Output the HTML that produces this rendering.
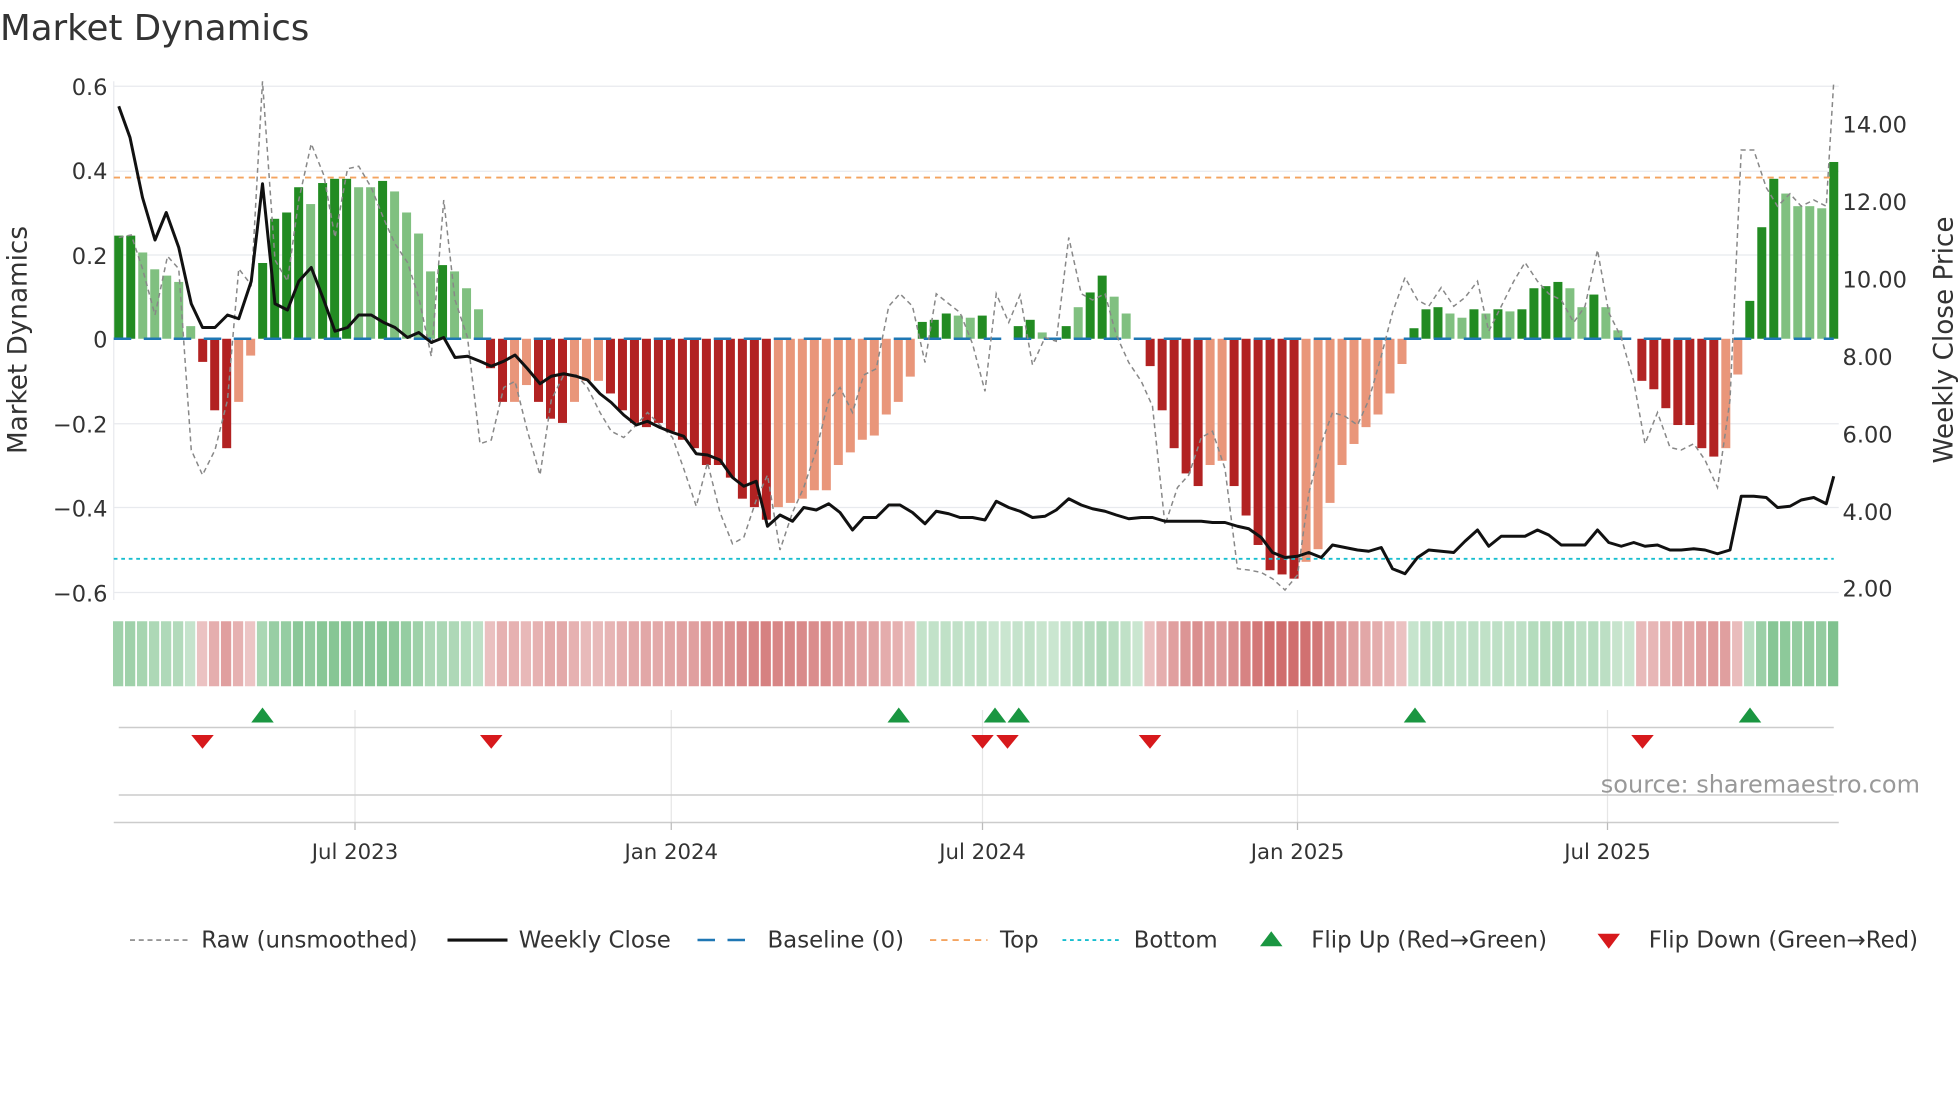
<!DOCTYPE html>
<html><head><meta charset="utf-8"><style>
html,body{margin:0;padding:0;background:#fff;width:1960px;height:1102px;overflow:hidden}
svg{display:block}
text{font-family:"DejaVu Sans","Liberation Sans",sans-serif}
</style></head><body>
<svg id="s" width="1960" height="1102" viewBox="0 0 1568 881.6" xmlns="http://www.w3.org/2000/svg">
<text x="0" y="32" font-size="28.5" fill="#333">Market Dynamics</text>
<g stroke="#e8eaee" stroke-width="1">
<line x1="91" y1="69" x2="1471" y2="69"/><line x1="91" y1="137" x2="1471" y2="137"/><line x1="91" y1="204" x2="1471" y2="204"/><line x1="91" y1="339" x2="1471" y2="339"/><line x1="91" y1="406" x2="1471" y2="406"/><line x1="91" y1="474" x2="1471" y2="474"/>
<line x1="91" y1="65" x2="91" y2="480"/>
</g>
<g font-size="18" fill="#333" text-anchor="end">
<text x="86" y="76">0.6</text><text x="86" y="143">0.4</text><text x="86" y="211">0.2</text><text x="86" y="278">0</text><text x="86" y="346">−0.2</text><text x="86" y="413">−0.4</text><text x="86" y="481">−0.6</text>
</g>
<g font-size="18" fill="#333">
<text x="1474" y="106">14.00</text><text x="1474" y="168">12.00</text><text x="1474" y="230">10.00</text><text x="1474" y="292">8.00</text><text x="1474" y="354">6.00</text><text x="1474" y="416">4.00</text><text x="1474" y="477">2.00</text>
</g>
<text transform="translate(21,272) rotate(-90)" font-size="21" fill="#333" text-anchor="middle">Market Dynamics</text>
<text transform="translate(1562,272) rotate(-90)" font-size="21" fill="#333" text-anchor="middle">Weekly Close Price</text>
<g id="bars"></g>
<line x1="91" y1="271" x2="1467" y2="271" stroke="#1f77b4" stroke-width="2" stroke-dasharray="14,10"/>
<line x1="91" y1="142" x2="1467" y2="142" stroke="#f4a460" stroke-width="1.5" stroke-dasharray="5,4"/>
<line x1="91" y1="447" x2="1467" y2="447" stroke="#17becf" stroke-width="1.5" stroke-dasharray="3,3"/>
<polyline id="raw" fill="none" stroke="#888" stroke-width="1.2" stroke-dasharray="4,3"/>
<polyline id="close" fill="none" stroke="#111" stroke-width="2.4" stroke-linejoin="round"/>
<g id="heat"></g>
<g stroke="#e6e6e6" stroke-width="1">
<line x1="284" y1="568" x2="284" y2="658"/><line x1="537" y1="568" x2="537" y2="658"/><line x1="786" y1="568" x2="786" y2="658"/><line x1="1038" y1="568" x2="1038" y2="658"/><line x1="1286" y1="568" x2="1286" y2="658"/>
</g>
<line x1="95" y1="582" x2="1467" y2="582" stroke="#ccc" stroke-width="1.2"/>
<line x1="95" y1="636" x2="1467" y2="636" stroke="#ccc" stroke-width="1.2"/>
<line x1="91" y1="658" x2="1471" y2="658" stroke="#ccc" stroke-width="1.2"/>
<g stroke="#bbb"><line x1="284" y1="658" x2="284" y2="664"/><line x1="537" y1="658" x2="537" y2="664"/><line x1="786" y1="658" x2="786" y2="664"/><line x1="1038" y1="658" x2="1038" y2="664"/><line x1="1286" y1="658" x2="1286" y2="664"/></g>
<g id="flips"></g>
<g font-size="17" fill="#333" text-anchor="middle">
<text x="284" y="687">Jul 2023</text><text x="537" y="687">Jan 2024</text><text x="786" y="687">Jul 2024</text><text x="1038" y="687">Jan 2025</text><text x="1286" y="687">Jul 2025</text>
</g>
<text x="1536" y="634" font-size="19.2" fill="#999" text-anchor="end">source: sharemaestro.com</text>
<g font-size="18.3" fill="#333">
<line x1="104" y1="752" x2="150" y2="752" stroke="#888" stroke-width="1.3" stroke-dasharray="4,3"/><text x="161" y="758">Raw (unsmoothed)</text>
<line x1="358" y1="752" x2="406" y2="752" stroke="#111" stroke-width="2.5"/><text x="415" y="758">Weekly Close</text>
<line x1="558" y1="752" x2="604" y2="752" stroke="#1f77b4" stroke-width="2" stroke-dasharray="14,10"/><text x="614" y="758">Baseline (0)</text>
<line x1="744" y1="752" x2="790" y2="752" stroke="#f4a460" stroke-width="1.5" stroke-dasharray="5,4"/><text x="800" y="758">Top</text>
<line x1="850" y1="752" x2="896" y2="752" stroke="#17becf" stroke-width="1.5" stroke-dasharray="3,3"/><text x="907" y="758">Bottom</text>
<polygon points="1008,757 1026,757 1017,745" fill="#1a9641"/><text x="1049" y="758">Flip Up (Red→Green)</text>
<polygon points="1278,747 1296,747 1287,759" fill="#d7191c"/><text x="1319" y="758">Flip Down (Green→Red)</text>
</g>
</svg>
<script>
var NS="http://www.w3.org/2000/svg";
function el(t,a,p){var e=document.createElementNS(NS,t);for(var k in a)e.setAttribute(k,a[k]);p.appendChild(e);return e;}
var V=[[.245,1],[.245,1],[.205,0],[.165,0],[.15,0],[.135,0],[.03,0],[-.055,1],[-.17,1],[-.26,1],[-.15,0],[-.04,0],[.18,1],[.285,1],[.30,1],[.36,1],[.32,0],[.37,1],[.38,1],[.38,1],[.36,0],[.36,0],[.375,1],[.35,0],[.30,0],[.25,0],[.16,0],[.175,1],[.16,0],[.12,0],[.07,0],
[-.07,1],[-.15,1],[-.15,0],[-.11,0],[-.15,1],[-.19,1],[-.2,1],[-.15,0],[-.1,0],[-.1,0],[-.13,1],[-.17,1],[-.2,1],[-.21,1],[-.2,1],[-.22,1],[-.24,1],[-.26,1],[-.3,1],[-.3,1],[-.33,1],[-.38,1],[-.4,1],[-.43,1],[-.4,0],[-.39,0],[-.38,0],[-.36,0],[-.36,0],[-.3,0],[-.27,0],[-.24,0],[-.23,0],[-.18,0],[-.15,0],[-.09,0],
[.04,1],[.045,1],[.06,1],[.055,0],[.05,0],[.055,1],[0,0],[0,0],[.03,1],[.045,1],[.015,0],[0,0],[.03,1],[.075,0],[.11,1],[.15,1],[.1,0],[.06,0],[0,0],
[-.065,1],[-.17,1],[-.26,1],[-.32,1],[-.35,1],[-.3,0],[-.29,0],[-.35,1],[-.42,1],[-.49,1],[-.55,1],[-.56,1],[-.57,1],[-.53,0],[-.5,0],[-.39,0],[-.3,0],[-.25,0],[-.21,0],[-.18,0],[-.13,0],[-.06,0],
[.025,1],[.07,1],[.075,1],[.06,0],[.05,0],[.07,1],[.06,0],[.07,1],[.065,0],[.07,1],[.12,1],[.125,1],[.135,1],[.12,0],[.075,0],[.105,1],[.075,0],[.02,0],[0,0],
[-.1,1],[-.12,1],[-.165,1],[-.205,1],[-.205,1],[-.26,1],[-.28,1],[-.26,0],[-.085,0],
[.09,1],[.265,1],[.38,1],[.345,0],[.315,0],[.315,0],[.31,0],[.42,1]];
var n=V.length, x0=95, dx=(1467-x0)/(n-1);
var bars=document.getElementById('bars'),heat=document.getElementById('heat');
V.forEach(function(v,i){var x=x0+i*dx,val=v[0],h=Math.abs(val)*336.7,c;
 if(val>=0)c=v[1]?'#228b22':'#80c080';else c=v[1]?'#b22222':'#e9967a';
 if(h>0.5)el('rect',{x:x-3.6,y:val>=0?271-h:271,width:7.2,height:h,fill:c},bars);
 var a=0.24+Math.min(Math.abs(val),.55)*0.8, hc=val>=0?'rgba(34,150,60,'+a+')':'rgba(185,40,40,'+a+')';
 if(val===0) hc='rgba(34,150,60,0.24)';
 el('rect',{x:x-4.6,y:497,width:8.2,height:52,fill:hc},heat);
});
var C=[[95,85],[104,110],[114,158],[124,192],[133,170],[143,198],[153,243],[162,262],[172,262],[182,252],[191,255],[201,225],[210,147],[220,243],[230,248],[239,225],[249,214],[259,240],[268,265],[278,262],[287,252],[297,252],[307,258],[316,262],[326,270],[335,266],[345,274],[355,270],[364,286],[374,285],[384,289],[393,293],[403,289],[412,284],[422,295],[432,307],[441,301],[451,299],[461,301],[470,304],[480,315],[489,322],[499,332],[509,340],[518,337],[528,342],[538,346],[547,349],[557,363],[566,364],[576,368],[586,382],[595,389],[605,385],[614,421],[624,412],[634,417],[643,406],[653,408],[663,403],[672,410],[682,424],[691,414],[701,414],[711,404],[720,404],[730,410],[740,419],[749,409],[759,411],[768,414],[778,414],[788,416],[797,401],[807,406],[816,409],[826,414],[836,413],[845,408],[855,399],[865,404],[874,407],[884,409],[893,412],[903,415],[913,414],[922,414],[932,417],[942,417],[951,417],[961,417],[970,418],[980,418],[990,421],[999,423],[1009,430],[1018,442],[1028,446],[1038,445],[1047,442],[1057,446],[1066,436],[1076,438],[1086,440],[1095,441],[1105,438],[1114,455],[1124,459],[1134,446],[1143,440],[1153,441],[1163,442],[1172,433],[1182,424],[1191,437],[1201,429],[1211,429],[1220,429],[1230,424],[1239,428],[1249,436],[1259,436],[1268,436],[1278,424],[1287,434],[1297,437],[1307,434],[1316,437],[1326,436],[1336,440],[1345,440],[1355,439],[1364,440],[1374,443],[1384,440],[1393,397],[1403,397],[1413,398],[1422,406],[1432,405],[1441,400],[1451,398],[1461,403],[1467,381]];
document.getElementById('close').setAttribute('points',C.join(' '));
var R=[[95,190],[105,188],[114,215],[124,252],[134,205],[143,215],[153,360],[162,380],[172,360],[182,320],[191,215],[201,228],[210,65],[220,208],[230,225],[239,160],[249,115],[259,140],[268,190],[278,135],[287,133],[297,150],[307,175],[316,195],[326,210],[335,238],[345,285],[355,160],[364,240],[374,270],[384,355],[393,352],[403,310],[412,305],[422,345],[432,380],[441,320],[451,300],[461,300],[470,310],[480,330],[489,345],[499,350],[509,340],[518,330],[528,340],[538,350],[547,375],[557,405],[566,370],[576,410],[586,435],[595,430],[605,400],[614,380],[624,440],[634,410],[643,390],[653,360],[663,320],[672,310],[682,330],[691,300],[701,295],[711,245],[720,235],[730,245],[740,290],[749,235],[759,243],[768,250],[778,275],[788,313],[797,235],[807,258],[816,236],[826,292],[836,270],[845,273],[855,190],[865,235],[874,240],[884,235],[893,268],[903,290],[913,305],[922,325],[932,420],[942,390],[951,380],[961,350],[970,345],[980,375],[990,455],[999,456],[1009,458],[1018,463],[1028,472],[1038,460],[1047,395],[1057,355],[1066,330],[1076,333],[1086,340],[1095,320],[1105,285],[1114,250],[1124,222],[1134,240],[1143,245],[1153,230],[1163,245],[1172,238],[1182,225],[1191,265],[1201,245],[1211,225],[1220,210],[1230,225],[1239,235],[1249,240],[1259,258],[1268,245],[1278,200],[1287,250],[1297,270],[1307,305],[1316,355],[1326,330],[1336,358],[1345,360],[1355,355],[1364,368],[1374,390],[1384,320],[1393,120],[1403,120],[1413,150],[1422,165],[1432,155],[1441,165],[1451,160],[1461,165],[1467,65]];
document.getElementById('raw').setAttribute('points',R.join(' '));
var F=document.getElementById('flips');
[210,719,796,815,1132,1400].forEach(function(x){el('polygon',{points:(x-9)+',578 '+(x+9)+',578 '+x+',566',fill:'#1a9641'},F);});
[162,393,786,806,920,1314].forEach(function(x){el('polygon',{points:(x-9)+',588 '+(x+9)+',588 '+x+',599',fill:'#d7191c'},F);});
</script>
</body></html>
